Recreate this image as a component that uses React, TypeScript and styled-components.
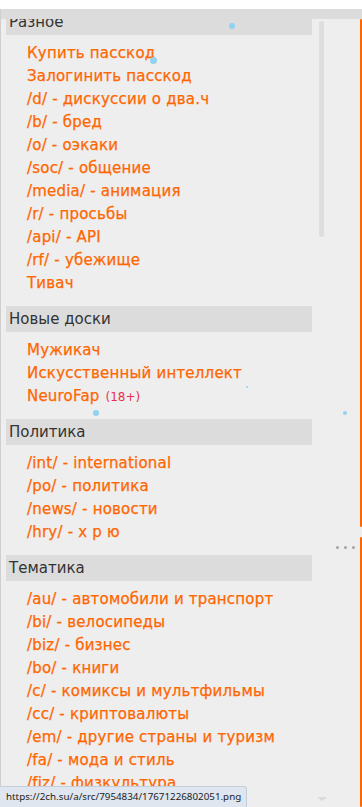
import styled, { createGlobalStyle } from "styled-components";

interface Board {
  name: string;
  adult?: boolean;
}

interface Section {
  title: string;
  boards: Board[];
}

const sections: Section[] = [
  {
    title: "Разное",
    boards: [
      { name: "Купить пасскод" },
      { name: "Залогинить пасскод" },
      { name: "/d/ - дискуссии о два.ч" },
      { name: "/b/ - бред" },
      { name: "/o/ - оэкаки" },
      { name: "/soc/ - общение" },
      { name: "/media/ - анимация" },
      { name: "/r/ - просьбы" },
      { name: "/api/ - API" },
      { name: "/rf/ - убежище" },
      { name: "Тивач" },
    ],
  },
  {
    title: "Новые доски",
    boards: [
      { name: "Мужикач" },
      { name: "Искусственный интеллект" },
      { name: "NeuroFap", adult: true },
    ],
  },
  {
    title: "Политика",
    boards: [
      { name: "/int/ - international" },
      { name: "/po/ - политика" },
      { name: "/news/ - новости" },
      { name: "/hry/ - х р ю" },
    ],
  },
  {
    title: "Тематика",
    boards: [
      { name: "/au/ - автомобили и транспорт" },
      { name: "/bi/ - велосипеды" },
      { name: "/biz/ - бизнес" },
      { name: "/bo/ - книги" },
      { name: "/c/ - комиксы и мультфильмы" },
      { name: "/cc/ - криптовалюты" },
      { name: "/em/ - другие страны и туризм" },
      { name: "/fa/ - мода и стиль" },
      { name: "/fiz/ - физкультура" },
      { name: "/fl/ - иностранные языки" },
    ],
  },
];

// snowflakes drifting over the menu
const flakes = [
  { x: 232, y: 26, r: 3 },
  { x: 153, y: 60, r: 3.5 },
  { x: 247, y: 387, r: 1 },
  { x: 96, y: 413, r: 3 },
  { x: 345, y: 413, r: 2 },
];

export default function App() {
  return (
    <>
      <GlobalStyle />
      <Frame>
        <TopGap />
        <Panel>
          <TopStrip />
          <Body>
            <Menu>
              {sections.map((s, i) => (
                <Group key={s.title}>
                  <GroupTitle $first={i === 0}>{s.title}</GroupTitle>
                  <List>
                    {s.boards.map((b) => (
                      <Item key={b.name}>
                        {b.name}
                        {b.adult && <Adult>(18+)</Adult>}
                      </Item>
                    ))}
                  </List>
                </Group>
              ))}
            </Menu>
            <ScrollTrack>
              <Thumb />
              <DownArrow />
            </ScrollTrack>
            <Gutter>
              <Dots>
                <Dot />
                <Dot />
                <Dot />
              </Dots>
            </Gutter>
            <Edge>
              <EdgeBar $h={508} />
              <EdgeBar $h={270} />
            </Edge>
          </Body>
        </Panel>
        {flakes.map((f, i) => (
          <Flake
            key={i}
            style={{ left: f.x - f.r, top: f.y - f.r, width: f.r * 2, height: f.r * 2 }}
          />
        ))}
        <Status>https://2ch.su/a/src/7954834/17671226802051.png</Status>
      </Frame>
    </>
  );
}

const GlobalStyle = createGlobalStyle`
  html, body {
    margin: 0;
    padding: 0;
    background: #fff;
  }
`;

const Frame = styled.div`
  position: relative;
  width: 362px;
  height: 807px;
  overflow: hidden;
  display: flex;
  flex-direction: column;
  font-family: "DejaVu Sans", Verdana, sans-serif;
`;

const TopGap = styled.div`
  height: 9px;
  flex-shrink: 0;
  background: #fff;
`;

const Panel = styled.div`
  flex: 1;
  display: flex;
  flex-direction: column;
  background: #eeeeee;
  border-left: 1px solid #cfcfcf;
  min-height: 0;
`;

const TopStrip = styled.div`
  height: 10px;
  flex-shrink: 0;
  background: #dcdcdc;
  position: relative;
  z-index: 1;
`;

const Body = styled.div`
  flex: 1;
  display: flex;
  min-height: 0;
  overflow: hidden;
`;

const Menu = styled.div`
  width: 306px;
  padding-left: 5px;
  display: flex;
  flex-direction: column;
`;

const Group = styled.div`
  display: flex;
  flex-direction: column;
`;

const GroupTitle = styled.div<{ $first?: boolean }>`
  height: 26px;
  margin-top: ${(p) => (p.$first ? "-10px" : "0")};
  padding-left: 3px;
  background: #dcdcdc;
  color: #333;
  font-size: 15px;
  line-height: 26px;
`;

const List = styled.div`
  display: flex;
  flex-direction: column;
  padding: 7px 0 11px 21px;
`;

const Item = styled.div`
  height: 23px;
  line-height: 23px;
  color: #ff6600;
  font-size: 15px;
  letter-spacing: 0.2px;
  -webkit-text-stroke: 0.25px #ff6600;
  white-space: nowrap;
`;

const Adult = styled.span`
  margin-left: 6px;
  color: #e8304c;
  font-size: 12px;
  letter-spacing: 0;
  -webkit-text-stroke: 0;
`;

const ScrollTrack = styled.div`
  position: relative;
  width: 6px;
  margin-left: 7px;
  padding-top: 2px;
`;

const Thumb = styled.div`
  width: 5px;
  height: 216px;
  border-radius: 3px;
  background: #dedede;
`;

const DownArrow = styled.div`
  position: absolute;
  bottom: 6px;
  left: -2px;
  width: 0;
  height: 0;
  border-left: 5px solid transparent;
  border-right: 5px solid transparent;
  border-top: 4px solid #dadada;
`;

const Gutter = styled.div`
  flex: 1;
  display: flex;
  flex-direction: column;
  align-items: flex-end;
  padding-top: 527px;
  padding-right: 5px;
`;

const Dots = styled.div`
  display: flex;
  gap: 5px;
`;

const Dot = styled.span`
  width: 3px;
  height: 3px;
  border-radius: 50%;
  background: #a6a6a6;
`;

const Edge = styled.div`
  width: 2px;
  display: flex;
  flex-direction: column;
  gap: 10px;
`;

const EdgeBar = styled.div<{ $h: number }>`
  height: ${(p) => p.$h}px;
  background: #ff6600;
  border-radius: 1px;
`;

const Flake = styled.span`
  position: absolute;
  border-radius: 50%;
  background: #8fd3f0;
  z-index: 2;
`;

const Status = styled.div`
  position: absolute;
  left: 0;
  bottom: 0;
  z-index: 3;
  width: 234px;
  height: 20px;
  padding: 0 6px;
  background: #dfe6ef;
  border: 1px solid #c4cfdc;
  border-left: none;
  border-bottom: none;
  border-top-right-radius: 3px;
  color: #222;
  font-family: "Noto Sans", "Liberation Sans", sans-serif;
  font-size: 9.8px;
  line-height: 20px;
  white-space: nowrap;
  overflow: hidden;
`;
